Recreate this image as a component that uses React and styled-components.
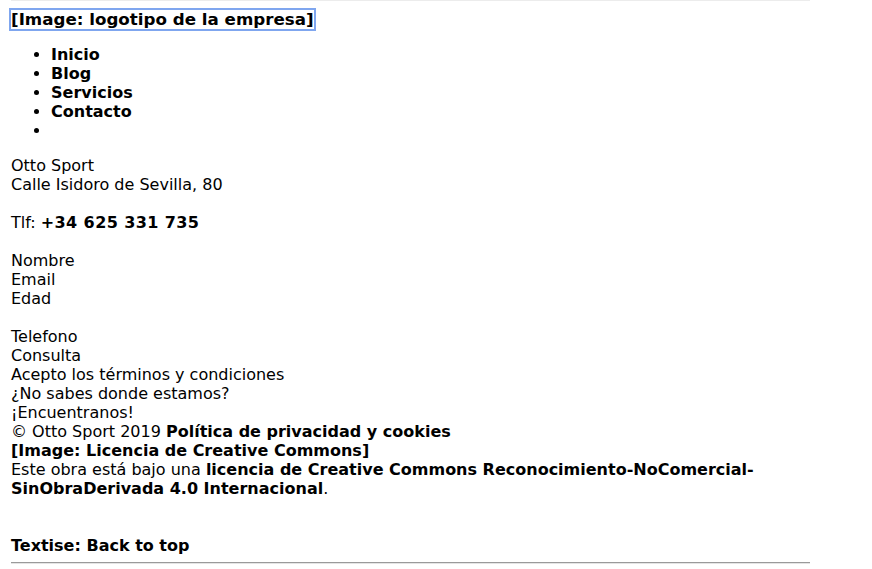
import React from "react";
import styled, { createGlobalStyle } from "styled-components";

const Global = createGlobalStyle`
  html, body { margin: 0; padding: 0; background: #fff; }
  body {
    font-family: "DejaVu Sans", Verdana, "Noto Sans", sans-serif;
    font-size: 16px;
    line-height: 19px;
    color: #000;
  }
`;

const Page = styled.div`
  width: 799px;
  margin-left: 11px;
  display: flex;
  flex-direction: column;
`;

const Rule = styled.div`
  height: 1px;
  background: ${(p) => p.$color};
  margin-top: ${(p) => p.$top || 0}px;
  margin-bottom: ${(p) => p.$bottom || 0}px;
`;

const LogoRow = styled.div`
  height: 19px;
`;

const LogoAlt = styled.span`
  display: inline-block;
  height: 19px;
  line-height: 19px;
  font-size: 16.7px;
  font-weight: bold;
  outline: 2px solid #7fa6ef;
`;

const Nav = styled.ul`
  margin: 16px 0;
  padding-left: 40px;
  list-style: disc;
`;

const NavItem = styled.li`
  font-weight: bold;
  height: 19px;
`;

const Block = styled.div`
  display: flex;
  flex-direction: column;
  margin-top: ${(p) => (p.$gap || 0) * 19}px;
`;

const Line = styled.div`
  height: 19px;
  white-space: nowrap;
`;

const Strong = styled.strong`
  font-weight: bold;
`;

const Phone = styled.strong`
  font-weight: bold;
  letter-spacing: 0.4px;
`;

export default function App() {
  const nav = ["Inicio", "Blog", "Servicios", "Contacto", ""];
  return (
    <>
      <Global />
      <Page>
        <Rule $color="#ececec" $bottom={9} />
        <LogoRow>
          <LogoAlt>[Image: logotipo de la empresa]</LogoAlt>
        </LogoRow>
        <Nav>
          {nav.map((n, i) => (
            <NavItem key={i}>{n}</NavItem>
          ))}
        </Nav>
        <Block>
          <Line>Otto Sport</Line>
          <Line>Calle Isidoro de Sevilla, 80</Line>
        </Block>
        <Block $gap={1}>
          <Line>
            Tlf: <Phone>+34 625 331 735</Phone>
          </Line>
        </Block>
        <Block $gap={1}>
          <Line>Nombre</Line>
          <Line>Email</Line>
          <Line>Edad</Line>
        </Block>
        <Block $gap={1}>
          <Line>Telefono</Line>
          <Line>Consulta</Line>
          <Line>Acepto los términos y condiciones</Line>
          <Line>¿No sabes donde estamos?</Line>
          <Line>¡Encuentranos!</Line>
          <Line>
            © Otto Sport 2019 <Strong>Política de privacidad y cookies</Strong>
          </Line>
          <Line>
            <Strong>[Image: Licencia de Creative Commons]</Strong>
          </Line>
          <Line>
            Este obra está bajo una{" "}
            <Strong>licencia de Creative Commons Reconocimiento-NoComercial-</Strong>
          </Line>
          <Line>
            <Strong>SinObraDerivada 4.0 Internacional</Strong>.
          </Line>
        </Block>
        <Block $gap={2}>
          <Line>
            <Strong>Textise: Back to top</Strong>
          </Line>
        </Block>
        <Rule $color="#9a9a9a" $top={7} />
        <Rule $color="#e4e4e4" />
      </Page>
    </>
  );
}
